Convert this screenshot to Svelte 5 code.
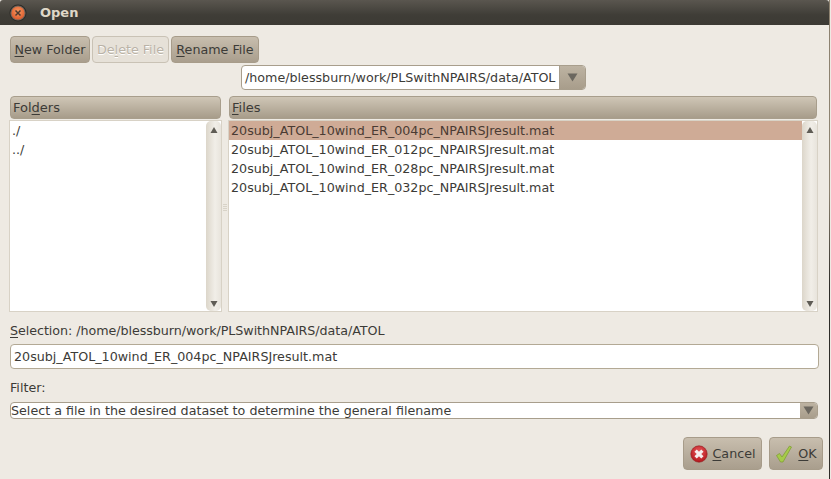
<script>
	const files = [
		'20subj_ATOL_10wind_ER_004pc_NPAIRSJresult.mat',
		'20subj_ATOL_10wind_ER_012pc_NPAIRSJresult.mat',
		'20subj_ATOL_10wind_ER_028pc_NPAIRSJresult.mat',
		'20subj_ATOL_10wind_ER_032pc_NPAIRSJresult.mat'
	];
	const folders = ['./', '../'];
	const dir = '/home/blessburn/work/PLSwithNPAIRS/data/ATOL';
	const selected = files[0];
</script>

{#snippet scrollbar()}
	<div class="scrollbar">
		<svg class="arrow" width="8" height="8" viewBox="0 0 8 8"><path d="M4 1 L7.5 7 H0.5 Z" /></svg>
		<svg class="arrow" width="8" height="8" viewBox="0 0 8 8"><path d="M0.5 1 H7.5 L4 7 Z" /></svg>
	</div>
{/snippet}

<div class="window">
	<header class="titlebar">
		<svg class="close" width="18" height="18" viewBox="0 0 18 18">
			<defs>
				<radialGradient id="closeFill" cx="50%" cy="40%" r="60%">
					<stop offset="0" stop-color="#f79a62" />
					<stop offset="1" stop-color="#dc5a2c" />
				</radialGradient>
			</defs>
			<circle cx="9" cy="9" r="8.5" fill="#2b2926" />
			<circle cx="9" cy="9" r="7.6" fill="#6a665e" />
			<circle cx="9" cy="9" r="6.6" fill="url(#closeFill)" />
			<path d="M6.5 6.5 L11.5 11.5 M11.5 6.5 L6.5 11.5" stroke="#4a3a30" stroke-width="1.5" />
		</svg>
		<span class="title">Open</span>
	</header>

	<main class="body">
		<div class="toolbar">
			<button class="btn new"><u>N</u>ew Folder</button>
			<button class="btn delete" disabled>De<u>l</u>ete File</button>
			<button class="btn rename"><u>R</u>ename File</button>
		</div>

		<div class="path-row">
			<div class="path-combo">
				<span class="path-value">{dir}</span>
				<span class="path-arrow">
					<svg width="11" height="9" viewBox="0 0 11 9"><path d="M0.5 0.5 H10.5 L5.5 8.5 Z" /></svg>
				</span>
			</div>
		</div>

		<div class="panes">
			<section class="pane folders">
				<div class="head">Fol<u>d</u>ers</div>
				<div class="list">
					<ul>
						{#each folders as f}
							<li>{f}</li>
						{/each}
					</ul>
					{@render scrollbar()}
				</div>
			</section>
			<div class="grip"></div>
			<section class="pane files">
				<div class="head"><u>F</u>iles</div>
				<div class="list">
					<ul>
						{#each files as f}
							<li class:sel={f === selected}>{f}</li>
						{/each}
					</ul>
					{@render scrollbar()}
				</div>
			</section>
		</div>

		<div class="label selection"><u>S</u>election: {dir}</div>
		<input class="entry" type="text" value={selected} />

		<div class="label filter">Filter:</div>
		<div class="filter-combo">
			<span class="filter-value">Select a file in the desired dataset to determine the general filename</span>
			<span class="filter-arrow">
				<svg width="11" height="9" viewBox="0 0 11 9"><path d="M0.5 0.5 H10.5 L5.5 8.5 Z" /></svg>
			</span>
		</div>

		<div class="actions">
			<button class="btn action cancel">
				<svg width="18" height="18" viewBox="0 0 18 18">
					<defs>
						<radialGradient id="cancelFill" cx="50%" cy="35%" r="65%">
							<stop offset="0" stop-color="#e8595c" />
							<stop offset="1" stop-color="#b3161c" />
						</radialGradient>
					</defs>
					<circle cx="9" cy="9" r="8.2" fill="url(#cancelFill)" stroke="#8f1d20" stroke-width="0.6" />
					<path d="M5.6 5.6 L12.4 12.4 M12.4 5.6 L5.6 12.4" stroke="#f6eeee" stroke-width="3.2" />
				</svg>
				<span><u>C</u>ancel</span>
			</button>
			<button class="btn action ok">
				<svg width="18" height="18" viewBox="0 0 18 18">
					<path d="M1.5 10.5 L4.5 8.5 L7 12 L14.5 1 L16.5 2 L8 17 H5.5 Z" fill="#a6cb4a" stroke="#7b9a30" stroke-width="0.7" />
				</svg>
				<span><u>O</u>K</span>
			</button>
		</div>
	</main>
</div>

<style>
	:global(body) {
		margin: 0;
		background: #eeeae3;
	}

	.window {
		width: 830px;
		height: 479px;
		box-sizing: border-box;
		display: flex;
		flex-direction: column;
		background: #eeeae3;
		border-right: 1px solid #2e2c28;
		border-image: linear-gradient(#8d8270, #8d8270 40%, #2e2c28 60%) 1;
		font-family: "DejaVu Sans", sans-serif;
		font-size: 12.7px;
		color: #3c3b37;
		overflow: hidden;
	}

	u {
		text-underline-offset: 2px;
		text-decoration-thickness: 1px;
	}

	.titlebar {
		height: 25px;
		flex-shrink: 0;
		display: flex;
		align-items: center;
		gap: 13px;
		padding-left: 9px;
		border-top-right-radius: 3px;
		border-top-left-radius: 3px;
		background: linear-gradient(#5a564f, #3f3d37 60%, #3c3a34);
	}

	.title {
		color: #dfd8c8;
		font-weight: 700;
		font-size: 13px;
	}

	.body {
		flex: 1;
		display: flex;
		flex-direction: column;
		padding: 11px 0 0 10px;
	}

	.toolbar {
		display: flex;
		gap: 2px;
	}

	.btn {
		height: 27px;
		padding: 0;
		font: inherit;
		color: #3c3b37;
		border: 1px solid #a79c8a;
		border-radius: 4px;
		background: linear-gradient(#c8beae, #a99e8d);
	}

	.new { width: 80px; }
	.delete {
		width: 77px;
		color: #b9b2a6;
		text-shadow: 0 1px 0 #fff;
		background: #e6e1d8;
		border-color: #c9c2b5;
	}
	.rename { width: 88px; }

	.path-row {
		display: flex;
		margin: 2px 0 0 231px;
	}

	.path-combo {
		width: 345px;
		height: 25px;
		box-sizing: border-box;
		display: flex;
		background: #fff;
		border: 1px solid #a89e8c;
		border-radius: 4px;
		overflow: hidden;
	}

	.path-value {
		flex: 1;
		padding-left: 3px;
		line-height: 23px;
		color: #3c3b37;
		white-space: nowrap;
	}

	.path-arrow {
		width: 25px;
		display: flex;
		align-items: center;
		justify-content: center;
		background: linear-gradient(#bdb3a2, #a89d8b);
		border-left: 1px solid #a89e8c;
	}

	.path-arrow path,
	.filter-arrow path {
		fill: #6b675f;
	}

	.panes {
		display: flex;
		margin-top: 6px;
	}

	.pane {
		display: flex;
		flex-direction: column;
	}

	.folders { width: 211px; }
	.files { width: 588px; }

	.grip {
		width: 8px;
		height: 8px;
		align-self: center;
		margin-top: 8px;
		background: repeating-linear-gradient(#d8d3c8 0 1px, transparent 1px 2px);
		background-size: 4px 8px;
		background-position: center;
		background-repeat: no-repeat;
	}

	.head {
		height: 23px;
		box-sizing: border-box;
		padding-left: 2px;
		line-height: 21px;
		font-size: 13px;
		border: 1px solid #a89e8c;
		border-radius: 4px;
		background: linear-gradient(#cfc6b6, #a79c8a);
	}

	.list {
		height: 192px;
		display: flex;
		margin: 1px -1px 0;
		background: #fff;
		border: 1px solid #d8d2c6;
		box-sizing: border-box;
	}

	.list ul {
		flex: 1;
		margin: 0;
		padding: 0;
		list-style: none;
	}

	.list li {
		height: 19px;
		line-height: 19px;
		padding-left: 2px;
		white-space: nowrap;
	}

	.list li.sel {
		background: #cfab96;
		color: #4a3b33;
	}

	.scrollbar {
		width: 15px;
		display: flex;
		flex-direction: column;
		justify-content: space-between;
		align-items: center;
		padding: 5px 0 3px;
		box-sizing: border-box;
		border-radius: 5px;
		background: linear-gradient(90deg, #dcd6ca, #f1eee8 60%, #e8e4dc);
	}

	.arrow path {
		fill: #5f5c55;
	}

	.label {
		height: 16px;
		line-height: 16px;
	}

	.selection {
		margin-top: 11px;
		letter-spacing: -0.05px;
	}

	.entry {
		width: 809px;
		height: 25px;
		margin-top: 5px;
		box-sizing: border-box;
		padding: 0 0 0 3px;
		font: inherit;
		color: #3c3b37;
		background: #fff;
		border: 1px solid #b3a995;
		border-radius: 4px;
		outline: none;
	}

	.filter {
		margin-top: 11px;
	}

	.filter-combo {
		width: 808px;
		height: 17px;
		margin-top: 6px;
		box-sizing: border-box;
		display: flex;
		background: #fff;
		border: 1px solid #a89e8c;
		border-radius: 4px;
		overflow: hidden;
	}

	.filter-value {
		flex: 1;
		line-height: 15px;
		white-space: nowrap;
	}

	.filter-arrow {
		width: 17px;
		display: flex;
		align-items: center;
		justify-content: center;
		background: linear-gradient(#bdb3a2, #a89d8b);
	}

	.actions {
		display: flex;
		justify-content: flex-end;
		gap: 7px;
		margin-top: 18px;
		padding-right: 6px;
	}

	.action {
		height: 33px;
		display: flex;
		align-items: center;
		justify-content: center;
		gap: 5px;
	}

	.cancel { width: 79px; }
	.ok { width: 54px; }
</style>
